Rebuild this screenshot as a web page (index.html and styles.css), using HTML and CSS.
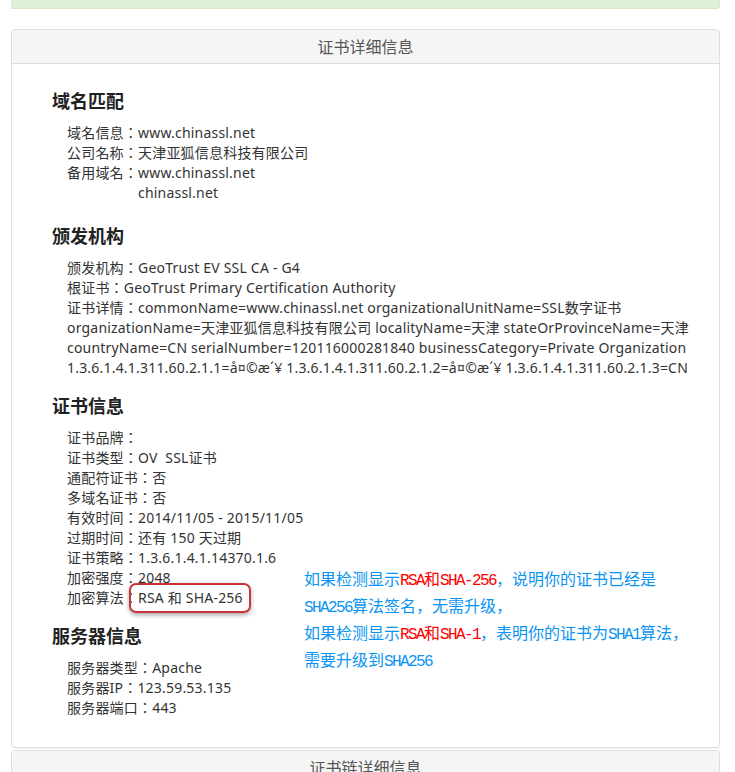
FILE: index.html
```html
<!DOCTYPE html>
<html lang="zh-CN">
<head>
  <meta charset="UTF-8" />
  <title>证书详细信息</title>
  <meta name="viewport" content="width=device-width, initial-scale=1" />
  <link rel="stylesheet" href="styles.css">
</head>
<body>

  <div class="alert-success"></div>

  <div class="panel">
    <div class="panel-heading">证书详细信息</div>
    <div class="panel-body">

      <h3>域名匹配</h3>
      <ul class="info first">
        <li>域名信息：www.chinassl.net</li>
        <li>公司名称：天津亚狐信息科技有限公司</li>
        <li class="multi">
          <span class="label">备用域名：</span>
          <span class="values">www.chinassl.net<br>chinassl.net</span>
        </li>
      </ul>

      <h3>颁发机构</h3>
      <ul class="info">
        <li>颁发机构：GeoTrust EV SSL CA - G4</li>
        <li>根证书：GeoTrust Primary Certification Authority</li>
        <li>证书详情：commonName=www.chinassl.net organizationalUnitName=SSL数字证书 organizationName=天津亚狐信息科技有限公司 localityName=天津 stateOrProvinceName=天津 countryName=CN serialNumber=120116000281840 businessCategory=Private Organization 1.3.6.1.4.1.311.60.2.1.1=å¤©æ´¥ 1.3.6.1.4.1.311.60.2.1.2=å¤©æ´¥ 1.3.6.1.4.1.311.60.2.1.3=CN</li>
      </ul>

      <h3>证书信息</h3>
      <ul class="info">
        <li>证书品牌：</li>
        <li>证书类型：OV&nbsp; SSL证书</li>
        <li>通配符证书：否</li>
        <li>多域名证书：否</li>
        <li>有效时间：2014/11/05 - 2015/11/05</li>
        <li>过期时间：还有 150 天过期</li>
        <li>证书策略：1.3.6.1.4.1.14370.1.6</li>
        <li>加密强度：2048</li>
        <li>加密算法：<span class="marked">RSA 和 SHA-256</span></li>
      </ul>

      <h3>服务器信息</h3>
      <ul class="info">
        <li>服务器类型：Apache</li>
        <li>服务器IP：123.59.53.135</li>
        <li>服务器端口：443</li>
      </ul>

      <p class="note">
        如果检测显示<em><span class="en">RSA</span>和<span class="en">SHA-256</span></em>，说明你的证书已经是<br>
        <span class="en">SHA256</span>算法签名，无需升级，<br>
        如果检测显示<em><span class="en">RSA</span>和<span class="en">SHA-1</span></em>，表明你的证书为<span class="en">SHA1</span>算法，<br>
        需要升级到<span class="en">SHA256</span>
      </p>
    </div>
  </div>

  <div class="panel">
    <div class="panel-heading">证书链详细信息</div>
    <div class="panel-body"></div>
  </div>

</body>
</html>
```

FILE: styles.css
```css
:root {
  --text: #333;
  --border: #ddd;
  --heading-bg: #f5f5f5;
  --note: #0a94f2;
}

* {
  box-sizing: border-box;
}

body {
  margin: 0 15px 0 11px;
  font-family: "Noto Sans", "Noto Sans CJK JP", sans-serif;
  font-size: 14px;
  line-height: 20px;
  letter-spacing: 0.2px;
  color: var(--text);
  background: #fff;
}

.alert-success {
  height: 9px;
  margin: 0 0 20px -3px;
  background: #dff0d8;
  border: 1px solid #d6e9c6;
  border-top: none;
  border-radius: 0 0 4px 4px;
}

.panel {
  border: 1px solid var(--border);
  border-radius: 4px;
  margin-bottom: 2px;
  box-shadow: 0 1px 1px rgba(0, 0, 0, 0.05);
}

.panel-heading {
  background: var(--heading-bg);
  border-bottom: 1px solid var(--border);
  border-radius: 3px 3px 0 0;
  text-align: center;
  font-family: "Noto Sans CJK SC", sans-serif;
  font-size: 16px;
  line-height: 33px;
  letter-spacing: 0;
  color: #555;
}

.panel-body {
  position: relative;
  padding: 23px 15px 29px 40px;
}

h3 {
  margin: 14px 0 10px;
  font-family: "Noto Sans CJK SC", sans-serif;
  font-size: 18px;
  line-height: 26px;
  font-weight: bold;
  letter-spacing: 0;
  color: #222;
}

.panel-body > h3:first-child {
  margin-top: 0;
}

.info {
  list-style: none;
  margin: 0;
  padding: 0 0 0 15px;
  /* keep the full-width colon centred */
  font-feature-settings: "locl" 0;
}

.info.first {
  padding-bottom: 5px;
}

.multi {
  display: flex;
}

.marked {
  position: relative;
}

.marked::after {
  content: "";
  position: absolute;
  top: -5px;
  bottom: -6px;
  left: -9px;
  right: -8px;
  border: 2px solid #c7353a;
  border-radius: 7px;
  box-shadow: 0 2px 4px rgba(0, 0, 0, 0.35);
}

.note {
  position: absolute;
  top: 502px;
  left: 292px;
  margin: 0;
  font-family: "Noto Sans CJK SC", sans-serif;
  font-size: 16px;
  line-height: 24px;
  letter-spacing: 0;
  color: var(--note);
}

.note em {
  font-style: normal;
  color: #ff0000;
}

.note .en {
  font-family: "Liberation Mono", monospace;
  letter-spacing: -1.6px;
}
```
